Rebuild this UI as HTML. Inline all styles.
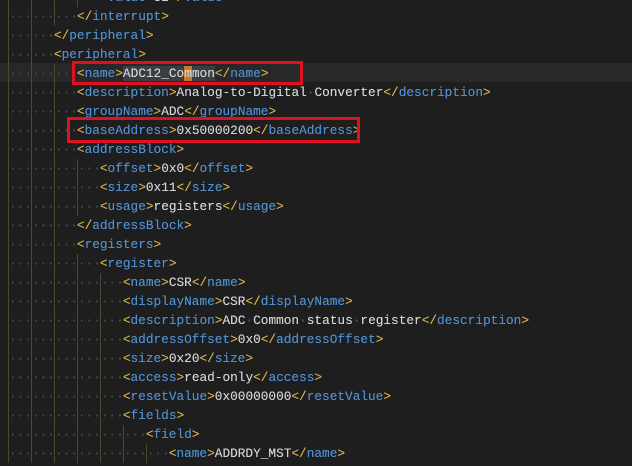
<!DOCTYPE html>
<html><head><meta charset="utf-8"><style>
html,body{margin:0;padding:0;background:#1e1e1e;width:632px;height:466px;overflow:hidden}
.l{position:absolute;left:8px;height:19px;line-height:19px;white-space:pre;font-family:"Liberation Mono",monospace;font-size:12.78px;color:#d4d4d4;text-shadow:0 0 0.3px currentColor}
.g{display:inline-block;width:3ch;border-left:1px solid #4a4936;box-sizing:border-box;color:#4a4a4a;height:19px;vertical-align:top;margin-left:0}
.b{color:#d7b04a}.t{color:#4f8fd0}.d{color:#555}
.hl{position:absolute;left:0;top:63px;width:632px;height:19px;background:#282828}
.box{position:absolute;border:3px solid #e0101e;box-sizing:border-box}
.w{background:#3a3d41}.c{background:#c47a2a}
</style></head><body>
<div class="hl"></div>
<div id="c"></div>
<script>
var L=[[4,'<value>32</value>'],[3,'</interrupt>'],[2,'</peripheral>'],[2,'<peripheral>'],[3,'NAME'],[3,'<description>Analog-to-Digital Converter</description>'],[3,'<groupName>ADC</groupName>'],[3,'<baseAddress>0x50000200</baseAddress>'],[3,'<addressBlock>'],[4,'<offset>0x0</offset>'],[4,'<size>0x11</size>'],[4,'<usage>registers</usage>'],[3,'</addressBlock>'],[3,'<registers>'],[4,'<register>'],[5,'<name>CSR</name>'],[5,'<displayName>CSR</displayName>'],[5,'<description>ADC Common status register</description>'],[5,'<addressOffset>0x0</addressOffset>'],[5,'<size>0x20</size>'],[5,'<access>read-only</access>'],[5,'<resetValue>0x00000000</resetValue>'],[5,'<fields>'],[6,'<field>'],[7,'<name>ADDRDY_MST</name>']];
function esc(s){return s.replace(/&/g,'&amp;').replace(/</g,'&lt;').replace(/>/g,'&gt;')}
function fmt(s){return s.replace(/(<\/?)(\w+)(>)|([^<]+)/g,function(m,a,n,b,txt){if(txt)return esc(txt).replace(/ /g,'<span class="d">·</span>');return '<span class="b">'+esc(a)+'</span><span class="t">'+n+'</span><span class="b">&gt;</span>'})}
var h='';L.forEach(function(x,i){var ind='';for(var k=0;k<x[0];k++)ind+='<span class="g">···</span>';var body=x[1]=='NAME'?'<span class="b">&lt;</span><span class="t">name</span><span class="b">&gt;</span><span class="w">ADC12_Co<span class="c">m</span>mon</span><span class="b">&lt;/</span><span class="t">name</span><span class="b">&gt;</span>':fmt(x[1]);h+='<div class="l" style="top:'+(-12+i*19)+'px">'+ind+body+'</div>'});
document.getElementById('c').innerHTML=h;
</script>
<div class="box" style="left:72px;top:61px;width:231px;height:24px"></div>
<div class="box" style="left:67px;top:117px;width:293px;height:26px"></div>
</body></html>
